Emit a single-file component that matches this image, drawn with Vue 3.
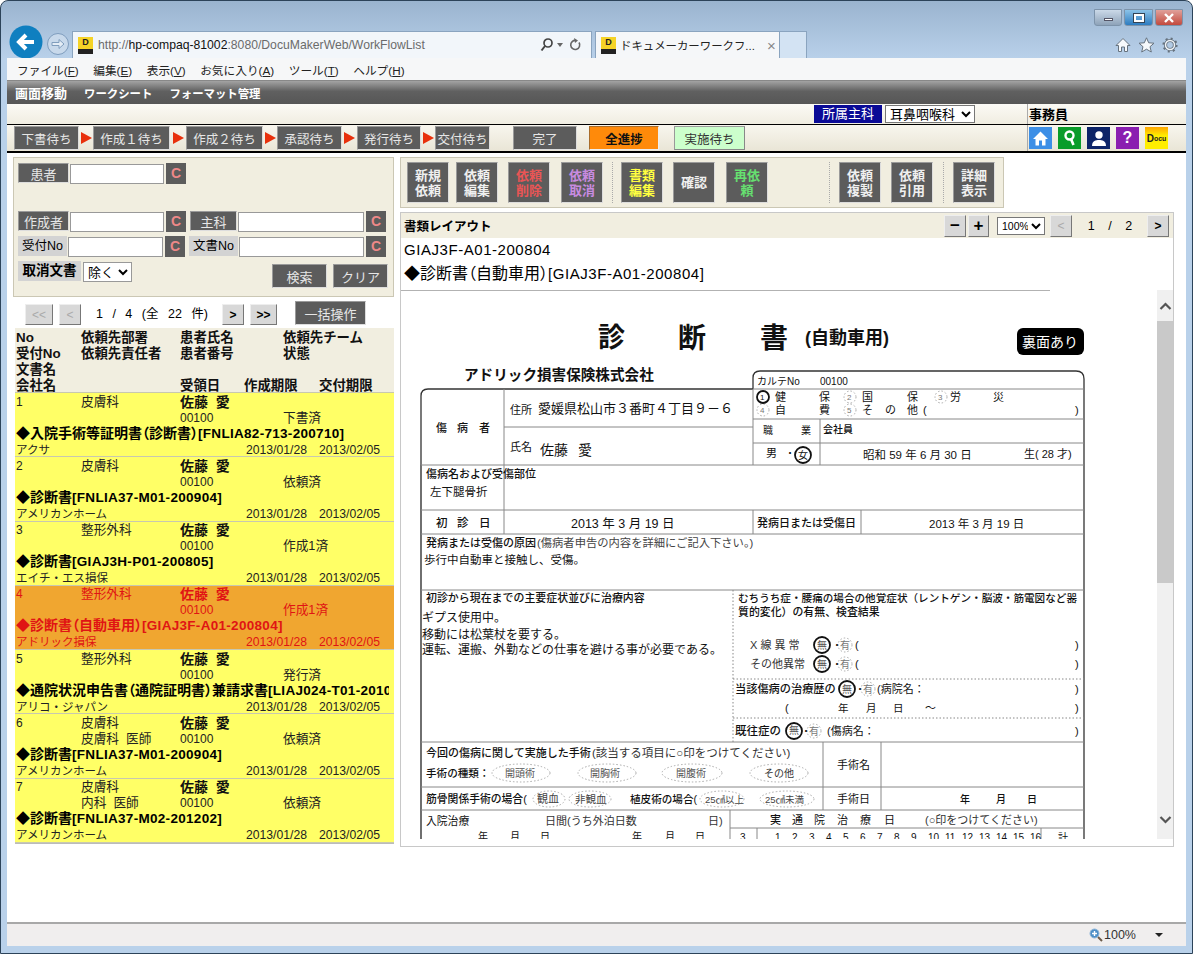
<template>
  <div class="win">
    <div class="caption">
      <div class="winbtns">
        <span class="wb wb-min"><i></i></span>
        <span class="wb wb-max"><i></i></span>
        <span class="wb wb-close">
          <svg width="12" height="10" viewBox="0 0 12 10"><path d="M2 1 L10 9 M10 1 L2 9" stroke="#fff" stroke-width="2.4" fill="none" /></svg>
        </span>
      </div>
    </div>
    <div class="navrow">
      <div class="back">
        <svg width="34" height="34" viewBox="0 0 34 34">
          <circle cx="17" cy="17" r="16.5" fill="#0f7fc0" />
          <path d="M25 17 H11 M17 10 L10 17 L17 24" stroke="#fff" stroke-width="4" fill="none" />
        </svg>
      </div>
      <div class="fwd">
        <svg width="22" height="22" viewBox="0 0 22 22">
          <circle cx="11" cy="11" r="10.5" fill="#c8d9eb" stroke="#7f9dbd" />
          <path d="M5 9.5 H12 V6.5 L17 11 L12 15.5 V12.5 H5 Z" fill="#e4edf6" stroke="#7f9dbd" stroke-width="1" />
        </svg>
      </div>
      <div class="addr">
        <span class="fav"><b>D</b></span>
        <span class="url">http://<em>hp-compaq-81002</em>:8080/DocuMakerWeb/WorkFlowList</span>
        <svg class="addr-ico" width="46" height="16" viewBox="0 0 46 16">
          <circle cx="8" cy="6" r="4" fill="none" stroke="#444" stroke-width="1.7" />
          <path d="M5 9 L1.5 13.5" stroke="#444" stroke-width="2" />
          <path d="M17 6 h6 l-3 4 z" fill="#666" />
          <path d="M36 3.5 a4.5 4.5 0 1 0 3 2" fill="none" stroke="#666" stroke-width="1.6" />
          <path d="M34 1 l4 2.5 l-3 2.5 z" fill="#666" />
        </svg>
      </div>
      <div class="tab">
        <span class="fav"><b>D</b></span>
        <span class="tab-t">ドキュメーカーワークフ...</span>
        <span class="tab-x">×</span>
      </div>
      <div class="newtab"></div>
      <div class="spacer"></div>
      <div class="tools">
        <svg width="16" height="16" viewBox="0 0 16 16"><path d="M8 1.5 L15 8.5 H12.5 V14.5 H9.5 V10 H6.5 V14.5 H3.5 V8.5 H1 Z" fill="#f6f9fc" stroke="#66727e" /></svg>
        <svg width="17" height="16" viewBox="0 0 17 16"><path d="M8.5 .8 L10.7 5.8 L16 6.2 L12 9.7 L13.3 15 L8.5 12.2 L3.7 15 L5 9.7 L1 6.2 L6.3 5.8 Z" fill="#f6f9fc" stroke="#66727e" /></svg>
        <svg width="16" height="16" viewBox="0 0 16 16"><circle cx="8" cy="8" r="4.5" fill="none" stroke="#66727e" stroke-width="3.2" /><circle cx="8" cy="8" r="6.4" fill="none" stroke="#66727e" stroke-width="2.4" stroke-dasharray="2 3" /><circle cx="8" cy="8" r="4.5" fill="none" stroke="#f0f4f8" stroke-width="1.5" /></svg>
      </div>
    </div>

    <div class="menubar">
      <span v-for="m in menus" :key="m.a">{{ m.t }}(<u>{{ m.a }}</u>)</span>
    </div>
    <div class="darkbar">
      <span class="db1">画面移動</span><span class="db2">ワークシート</span><span class="db2">フォーマット管理</span>
    </div>
    <div class="inforow">
      <span class="dept-label">所属主科</span>
      <select class="dept-sel"><option>耳鼻咽喉科</option></select>
      <span class="role">事務員</span>
    </div>
    <div class="stagerow">
      <template v-for="(s, i) in stages" :key="s.t">
        <span class="btn stage" :style="{ width: s.w + 'px' }">{{ s.t }}</span>
        <span v-if="i < stages.length - 1" class="arrow" :style="{ width: s.g + 'px' }"><i></i></span>
      </template>
      <span class="btn stage done">完了</span>
      <span class="btn stage all">全進捗</span>
      <span class="btn stage impl">実施待ち</span>
      <div class="appicons">
        <span class="appi" style="background:#3d8fe6">
          <svg width="17" height="17" viewBox="0 0 17 17"><path d="M8.5 1.5 L16 9 H13.5 V15.5 H10 V10.5 H7 V15.5 H3.5 V9 H1 Z" fill="#fff" /></svg>
        </span>
        <span class="appi" style="background:#0a9c2a">
          <svg width="17" height="19" viewBox="0 0 17 19"><circle cx="8.5" cy="6.5" r="4" fill="none" stroke="#fff" stroke-width="2.4" /><path d="M10 10 L12.5 16" stroke="#fff" stroke-width="2.6" /></svg>
        </span>
        <span class="appi" style="background:#0d2468">
          <svg width="18" height="19" viewBox="0 0 18 19"><circle cx="9" cy="6" r="3.7" fill="#fff" /><path d="M2 17 C2 11.5 6 11 9 11 C12 11 16 11.5 16 17 Z" fill="#fff" /></svg>
        </span>
        <span class="appi q" style="background:#8a1fb0">?</span>
        <span class="appi docu">D<small>ocu</small></span>
      </div>
    </div>

    <div class="main">
      <div class="left">
        <div class="filter">
          <div class="frow r1">
            <span class="btn lab">患者</span>
            <input class="inp w94" />
            <span class="cbtn">C</span>
          </div>
          <div class="frow r2">
            <span class="btn lab">作成者</span>
            <input class="inp w94" />
            <span class="cbtn">C</span>
            <span class="btn lab lab2">主科</span>
            <input class="inp w126" />
            <span class="cbtn">C</span>
          </div>
          <div class="frow r3">
            <span class="glab">受付No</span>
            <input class="inp w95" />
            <span class="cbtn">C</span>
            <span class="glab glab2">文書No</span>
            <input class="inp w125" />
            <span class="cbtn">C</span>
          </div>
          <div class="frow r4">
            <span class="glab cancel">取消文書</span>
            <select class="sel-jo"><option>除く</option></select>
            <div class="spacer"></div>
            <span class="btn act">検索</span>
            <span class="btn act">クリア</span>
          </div>
        </div>
        <div class="pager">
          <span class="pbtn off w28">&lt;&lt;</span>
          <span class="pbtn off w22">&lt;</span>
          <span class="ptext">1 / 4 (全 22 件)</span>
          <span class="pbtn w22">&gt;</span>
          <span class="pbtn w27">&gt;&gt;</span>
          <span class="btn bulk">一括操作</span>
        </div>
        <div class="list">
          <div class="lrow head">
            <span class="c1">No</span><span class="c2">依頼先部署</span><span class="c3">患者氏名</span><span class="c5">依頼先チーム</span>
            <span class="c1">受付No</span><span class="c2">依頼先責任者</span><span class="c3">患者番号</span><span class="c5">状態</span>
            <span class="full">文書名</span>
            <span class="c1">会社名</span><span class="c3">受領日</span><span class="c4">作成期限</span><span class="c6">交付期限</span>
          </div>
          <div v-for="r in rows" :key="r.no" class="lrow" :class="{ sel: r.sel }">
            <span class="c1">{{ r.no }}</span><span class="c2 dp">{{ r.dept }}</span><span class="c3 nm">佐藤&nbsp;&nbsp;愛</span>
            <span class="c2 dp">{{ r.sub }}</span><span class="c3">00100</span><span class="c5 dp">{{ r.st }}</span>
            <span class="full docn"><span class="dn">{{ r.name }}</span><span class="dc">{{ r.code }}</span></span>
            <span class="c1 co">{{ r.co }}</span><span class="c4 dt">2013/01/28</span><span class="c6 dt">2013/02/05</span>
          </div>
        </div>
      </div>

      <div class="right">
        <div class="toolbar">
          <template v-for="b in tools" :key="b.t">
            <span v-if="b.sep" class="tsep" :style="{ marginLeft: b.ml + 'px', marginRight: b.mr + 'px' }"></span>
            <span v-else class="btn tbtn" :style="{ color: b.c, marginRight: b.m + 'px' }">{{ b.t }}</span>
          </template>
        </div>
        <div class="docpanel">
          <div class="dochead">
            <span class="dh-t">書類レイアウト</span>
            <div class="spacer"></div>
            <span class="pbtn zm">−</span>
            <span class="pbtn zm">+</span>
            <select class="zoomsel"><option>100%</option></select>
            <span class="pbtn off w22">&lt;</span>
            <span class="dh-p">1 / 2</span>
            <span class="pbtn w22">&gt;</span>
          </div>
          <div class="docinfo">
            <div>GIAJ3F-A01-200804</div>
            <div><span class="din">◆診断書（自動車用）</span>[GIAJ3F-A01-200804]</div>
          </div>
          <div class="docview">
            <svg class="scan" width="756" height="549" viewBox="401 290 756 549">
              <line x1="401" y1="290" x2="1050" y2="290" stroke="#666" />
              <rect x="1017" y="328" width="67" height="27" rx="6" fill="#000" />
              <path d="M421 465 V396 Q421 389 428 389 H753" fill="none" stroke="#333" stroke-width="1.3" />
              <path d="M753 389 V378 Q753 371 760 371 H1076 Q1084 371 1084 379 V839" fill="none" stroke="#333" stroke-width="1.3" />
              <line x1="421" y1="465" x2="421" y2="839" stroke="#222" stroke-width="1.3" />
              <line v-for="(l, i) in lines" :key="'l' + i" :x1="l[0]" :y1="l[1]" :x2="l[2]" :y2="l[3]" stroke="#888" :stroke-dasharray="l[4] ? '1.5 2' : null" />
              <ellipse v-for="(o, i) in ovals" :key="'o' + i" :cx="o[0]" :cy="o[1]" :rx="o[2]" :ry="o[3]" fill="none" stroke="#aaa" stroke-dasharray="1.5 2" />
              <circle v-for="(c, i) in rings" :key="'c' + i" :cx="c[0]" :cy="c[1]" :r="c[2]" fill="none" stroke="#111" stroke-width="1.8" />
              <text v-for="(t, i) in texts" :key="'t' + i" :x="t[0]" :y="t[1]" :font-size="t[3]" :font-weight="t[4] ? (t[3] >= 14 ? 700 : 500) : 400" :fill="t[5] || '#111'" dominant-baseline="central">{{ t[2] }}</text>
            </svg>
            <div class="scroll">
              <svg class="sarrow" width="15" height="9" viewBox="0 0 15 9"><path d="M2.5 7 L7.5 2 L12.5 7" fill="none" stroke="#555" stroke-width="2.2" /></svg>
              <div class="thumb"></div>
              <div class="spacer"></div>
              <svg class="sarrow down" width="15" height="9" viewBox="0 0 15 9"><path d="M2.5 2 L7.5 7 L12.5 2" fill="none" stroke="#555" stroke-width="2.2" /></svg>
            </div>
          </div>
        </div>
      </div>
    </div>

    <div class="status">
      <svg width="14" height="14" viewBox="0 0 14 14"><circle cx="5.5" cy="5.5" r="4.5" fill="#4d8fc7" stroke="#8db5d8" /><path d="M3 5.5 H8 M5.5 3 V8" stroke="#fff" stroke-width="1.4" /><path d="M9 9 L13 13" stroke="#6b5a48" stroke-width="2" /></svg>
      <span class="st-zoom">100%</span>
      <i class="st-caret"></i>
    </div>
  </div>
</template>

<script setup>
const menus = [
  { t: 'ファイル', a: 'F' },
  { t: '編集', a: 'E' },
  { t: '表示', a: 'V' },
  { t: 'お気に入り', a: 'A' },
  { t: 'ツール', a: 'T' },
  { t: 'ヘルプ', a: 'H' },
]

const stages = [
  { t: '下書待ち', w: 65, g: 14 },
  { t: '作成１待ち', w: 77, g: 16 },
  { t: '作成２待ち', w: 77, g: 14 },
  { t: '承認待ち', w: 65, g: 15 },
  { t: '発行待ち', w: 64, g: 14 },
  { t: '交付待ち', w: 55, g: 0 },
]

const rows = [
  { no: 1, dept: '皮膚科', sub: '', st: '下書済', name: '◆入院手術等証明書（診断書）', code: '[FNLIA82-713-200710]', co: 'アクサ' },
  { no: 2, dept: '皮膚科', sub: '', st: '依頼済', name: '◆診断書', code: '[FNLIA37-M01-200904]', co: 'アメリカンホーム' },
  { no: 3, dept: '整形外科', sub: '', st: '作成1済', name: '◆診断書', code: '[GIAJ3H-P01-200805]', co: 'エイチ・エス損保' },
  { no: 4, dept: '整形外科', sub: '', st: '作成1済', name: '◆診断書（自動車用）', code: '[GIAJ3F-A01-200804]', co: 'アドリック損保', sel: true },
  { no: 5, dept: '整形外科', sub: '', st: '発行済', name: '◆通院状況申告書（通院証明書）兼請求書', code: '[LIAJ024-T01-201006]', co: 'アリコ・ジャパン' },
  { no: 6, dept: '皮膚科', sub: '皮膚科  医師', st: '依頼済', name: '◆診断書', code: '[FNLIA37-M01-200904]', co: 'アメリカンホーム' },
  { no: 7, dept: '皮膚科', sub: '内科  医師', st: '依頼済', name: '◆診断書', code: '[FNLIA37-M02-201202]', co: 'アメリカンホーム' },
]

const tools = [
  { t: '新規依頼', c: '#f0f0f0', m: 7 },
  { t: '依頼編集', c: '#f0f0f0', m: 10 },
  { t: '依頼削除', c: '#ea5555', m: 11 },
  { t: '依頼取消', c: '#c88be0', m: 0 },
  { sep: true, ml: 9, mr: 8 },
  { t: '書類編集', c: '#ffff40', m: 10 },
  { t: '確認', c: '#f0f0f0', m: 11 },
  { t: '再依頼', c: '#66e070', m: 0 },
  { sep: true, ml: 61, mr: 9 },
  { t: '依頼複製', c: '#f0f0f0', m: 10 },
  { t: '依頼引用', c: '#f0f0f0', m: 0 },
  { sep: true, ml: 10, mr: 9 },
  { t: '詳細表示', c: '#f0f0f0', m: 0 },
]

// scan of the paper form, in page coordinates
const lines = [
  [504, 389, 504, 534],
  [504, 427, 753, 427],
  [753, 389, 753, 465],
  [753, 389, 1084, 389],
  [753, 419, 1084, 419],
  [753, 443, 1084, 443],
  [820, 419, 820, 465],
  [421, 465, 1084, 465],
  [421, 510, 1084, 510],
  [421, 534, 1084, 534],
  [753, 510, 753, 534],
  [861, 510, 861, 534],
  [421, 590, 1084, 590],
  [733, 590, 733, 742, true],
  [733, 679, 1084, 679, true],
  [733, 718, 1084, 718, true],
  [421, 742, 1084, 742],
  [421, 787, 1084, 787],
  [421, 810, 1084, 810],
  [823, 742, 823, 810],
  [881, 742, 881, 810],
  [730, 810, 730, 839],
  [730, 828, 1084, 828],
  [757, 828, 757, 839],
  [1041, 828, 1041, 839],
]

const ovals = [
  [521, 773, 29, 9], [607, 773, 29, 9], [692, 773, 30, 9], [779, 773, 29, 9],
  [549, 799, 16, 8], [590, 799, 21, 8], [722, 799, 22, 8], [787, 799, 27, 8],
  [850, 397, 6, 6], [941, 397, 6, 6], [763, 410, 6, 6], [850, 410, 6, 6],
  [845, 645, 7, 7], [845, 664, 7, 7], [868, 689, 7, 7], [814, 731, 7, 7],
]

const rings = [
  [763, 397, 6], [803, 455, 8], [822, 645, 8], [822, 664, 8], [847, 689, 8], [794, 731, 8],
]

const nums = ['1', '2', '3', '4', '5', '6', '7', '8', '9', '10', '11', '12', '13', '14', '15', '16']

const texts = [
  [598, 338, '診', 27, true], [678, 338, '断', 28, true], [760, 338, '書', 28, true],
  [805, 338, '(自動車用)', 18, true],
  [1022, 342, '裏面あり', 14, false, '#fff'],
  [464, 375, 'アドリック損害保険株式会社', 14.6, true],
  [436, 428, '傷', 11, true], [457, 428, '病', 11, true], [479, 428, '者', 11, true],
  [510, 410, '住所', 11], [538, 408, '愛媛県松山市３番町４丁目９－６', 13],
  [510, 447, '氏名', 11], [540, 450, '佐藤', 14], [578, 450, '愛', 14],
  [757, 381, 'カルテNo', 10], [820, 381, '00100', 10],
  [760, 397, '1', 8], [775, 397, '健', 11], [819, 397, '保', 11], [847, 397, '2', 8, false, '#777'], [862, 397, '国', 11], [907, 397, '保', 11], [938, 397, '3', 8, false, '#777'], [950, 397, '労', 11], [993, 397, '災', 11],
  [760, 410, '4', 8, false, '#777'], [775, 410, '自', 11], [819, 410, '費', 11], [847, 410, '5', 8, false, '#777'], [862, 410, 'そ', 11], [885, 410, 'の', 11], [907, 410, '他', 11], [923, 410, '(', 11], [1075, 410, ')', 11],
  [763, 430, '職', 10], [801, 430, '業', 10], [823, 429, '会社員', 10, true],
  [766, 453, '男', 11], [785, 453, '・', 10], [798, 455, '女', 10],
  [863, 455, '昭和 59 年 6 月 30 日', 11.5], [1024, 454, '生( 28 才)', 11],
  [426, 474, '傷病名および受傷部位', 11, true], [430, 492, '左下腿骨折', 11.5],
  [436, 523, '初', 11.5, true], [457, 523, '診', 11.5, true], [479, 523, '日', 11.5, true],
  [571, 524, '2013 年 3 月 19 日', 12.5],
  [757, 523, '発病日または受傷日', 11, true], [929, 524, '2013 年 3 月 19 日', 11.5],
  [426, 543, '発病または受傷の原因', 11, true], [537, 543, '(傷病者申告の内容を詳細にご記入下さい。)', 11.3, false, '#444'],
  [424, 560, '歩行中自動車と接触し、受傷。', 11.5],
  [426, 598, '初診から現在までの主要症状並びに治療内容', 10.95, true],
  [422, 618, 'ギプス使用中。', 12], [422, 635, '移動には松葉杖を要する。', 12], [422, 650, '運転、運搬、外勤などの仕事を避ける事が必要である。', 12],
  [738, 598, 'むちうち症・腰痛の場合の他覚症状（レントゲン・脳波・筋電図など器', 10.6, true],
  [738, 612, '質的変化）の有無、検査結果', 10.9, true],
  [750, 645, 'X 線 異 常', 11, false, '#333'], [750, 664, 'その他異常', 11, false, '#333'],
  [817, 645, '無', 10, false, '#555'], [817, 664, '無', 10, false, '#555'], [832, 645, '・', 10], [832, 664, '・', 10],
  [840, 645, '有', 10, false, '#777'], [840, 664, '有', 10, false, '#777'], [855, 645, '(', 11], [855, 664, '(', 11], [1075, 645, ')', 11], [1075, 664, ')', 11],
  [735, 689, '当該傷病の治療歴の', 11.2, true], [842, 689, '無', 10, false, '#555'], [855, 689, '・', 10], [863, 689, '有', 10, false, '#777'], [877, 689, '(病院名：', 11], [1075, 689, ')', 11],
  [785, 708, '(', 11], [838, 708, '年', 10.5], [866, 708, '月', 10.5], [893, 708, '日', 10.5], [925, 708, '～', 11], [1075, 708, ')', 11],
  [735, 731, '既往症の', 11.5, true], [789, 730, '無', 10, false, '#555'], [801, 731, '・', 10], [809, 731, '有', 10, false, '#777'], [827, 731, '(傷病名：', 11], [1075, 731, ')', 11],
  [426, 753, '今回の傷病に関して実施した手術', 11, true], [592, 753, '(該当する項目に○印をつけてください)', 11.5, false, '#333'],
  [426, 773, '手術の種類：', 10.6, true],
  [505, 773, '開頭術', 10, false, '#555'], [590, 773, '開胸術', 10, false, '#555'], [676, 773, '開腹術', 10, false, '#555'], [764, 773, 'その他', 10, false, '#333'],
  [837, 765, '手術名', 11], [837, 799, '手術日', 11],
  [960, 799, '年', 10, true], [996, 799, '月', 10, true], [1027, 799, '日', 10, true],
  [426, 799, '筋骨関係手術の場合(', 10.8, true],
  [537, 799, '観血', 11, false, '#444'], [575, 799, '非観血', 10.5, false, '#444'],
  [630, 799, '植皮術の場合(', 10.6, true], [705, 799, '25㎠以上', 9.5, false, '#444'], [765, 799, '25㎠未満', 9.5, false, '#444'],
  [426, 821, '入院治療', 10.8], [545, 821, '日間(うち外泊日数', 11, false, '#333'], [708, 821, '日)', 11, false, '#333'],
  [770, 820, '実', 11, true], [792, 820, '通', 11], [814, 820, '院', 11], [837, 820, '治', 11], [860, 820, '療', 11], [884, 820, '日', 11],
  [925, 820, '(○印をつけてください)', 11, false, '#333'],
  [478, 836, '年', 10], [510, 836, '月', 10], [540, 836, '日', 10], [632, 836, '年', 10], [665, 836, '月', 10], [695, 836, '日', 10],
  [740, 837, '3', 10],
  ...nums.map((n, i) => [775 + i * 17, 837, n, 10]),
  [1058, 837, '計', 10],
]
</script>

<style>
html, body { margin: 0; background: #fff; }
</style>

<style scoped>
.win {
  width: 1193px;
  height: 954px;
  box-sizing: border-box;
  border: 1px solid #2c4359;
  border-radius: 8px 8px 0 0;
  background: linear-gradient(#9ab4cf 0, #b9d1ea 58px);
  padding: 0 6px 7px;
  display: flex;
  flex-direction: column;
  font-family: "Liberation Sans", "Noto Sans CJK JP", sans-serif;
  font-size: 12px;
  color: #000;
  overflow: hidden;
}
.spacer { flex: 1; }
.caption { height: 30px; display: flex; justify-content: flex-end; align-items: flex-start; flex: none; }
.winbtns { display: flex; gap: 2px; margin: 8px 3px 0 0; }
.wb { height: 17px; display: flex; align-items: center; justify-content: center; border: 1px solid #7d93aa; border-radius: 0 0 3px 3px; box-sizing: border-box; }
.wb-min { width: 28px; background: linear-gradient(#cbd9e8, #8ea3b9); }
.wb-min i { width: 9px; height: 3px; background: #fff; border: 1px solid #556; margin-top: 4px; box-sizing: border-box; }
.wb-max { width: 29px; background: linear-gradient(#8cc3e8, #2d7cc0); }
.wb-max i { width: 10px; height: 8px; border: 2px solid #fff; outline: 1px solid #345; box-sizing: border-box; }
.wb-close { width: 28px; background: linear-gradient(#e0a09a, #c34a3e); }
.navrow { height: 27px; display: flex; flex: none; align-items: stretch; }
.back { width: 34px; height: 34px; margin: -6px 0 0 2px; flex: none; }
.fwd { width: 22px; height: 22px; margin: 2px 0 0 4px; flex: none; }
.addr {
  width: 520px;
  margin-left: 3px;
  box-sizing: border-box;
  border: 1px solid #8aa4bf;
  border-bottom: none;
  background: #f2f6fa;
  display: flex;
  align-items: center;
  padding: 0 5px;
  flex: none;
}
.fav {
  width: 15px;
  height: 17px;
  flex: none;
  background: linear-gradient(#f5d327 0 70%, #222 70%);
  display: flex;
  justify-content: center;
  align-items: flex-start;
  font: 700 9px/11px "Liberation Sans", sans-serif;
  color: #222;
}
.url { margin-left: 5px; font-size: 12.2px; color: #6b6b6b; white-space: nowrap; flex: 1; }
.url em { font-style: normal; color: #111; }
.addr-ico { flex: none; }
.tab {
  width: 185px;
  margin-left: 3px;
  box-sizing: border-box;
  border: 1px solid #8aa4bf;
  border-bottom: none;
  background: #f5f7f9;
  display: flex;
  align-items: center;
  padding-left: 5px;
  flex: none;
}
.tab-t { margin-left: 4px; font-size: 11.4px; white-space: nowrap; color: #222; width: 142px; }
.tab-x { margin-left: 5px; color: #888; font-size: 15px; }
.newtab { width: 27px; flex: none; border: 1px solid #8aa4bf; border-left: none; border-bottom: none; background: #d3e3f3; box-sizing: border-box; }
.tools { display: flex; gap: 7px; align-items: center; margin-right: 8px; }
.menubar {
  height: 22px;
  flex: none;
  background: #f6f7f8;
  display: flex;
  align-items: center;
  padding-left: 10px;
  gap: 14.5px;
  font-size: 11.7px;
  color: #222;
}
.darkbar {
  height: 24px;
  flex: none;
  background: linear-gradient(#a3a3a3 0, #606060 45%, #565656 100%);
  display: flex;
  align-items: center;
  padding-left: 8px;
  gap: 17px;
  color: #fff;
  font-weight: 700;
  border-top: 1px solid #888;
  box-sizing: border-box;
}
.db1 { font-size: 13px; }
.db2 { font-size: 11.4px; }
.inforow {
  height: 21px;
  flex: none;
  display: flex;
  align-items: center;
  background: linear-gradient(#fbfaf5, #f0ede1);
  box-sizing: border-box;
  border-bottom: 1px solid #000;
  padding-left: 807px;
}
.dept-label {
  width: 68px;
  height: 18px;
  background: #0a0a96;
  color: #fff;
  font-size: 13px;
  line-height: 18px;
  text-align: center;
}
.dept-sel {
  width: 90px;
  height: 18px;
  margin-left: 3px;
  font: 13px "Liberation Sans", "Noto Sans CJK JP", sans-serif;
  padding: 0;
  border: 1px solid #777;
  background: #fff;
}
.role { margin-left: 52px; padding-left: 1px; font-weight: 700; font-size: 13px; border-left: 1px solid #aaa; height: 20px; line-height: 22px; }
.stagerow {
  height: 28px;
  flex: none;
  display: flex;
  align-items: center;
  background: linear-gradient(#f8f6ee, #e9e5d6);
  box-sizing: border-box;
  border-bottom: 2px solid #000;
  padding-left: 7px;
}
.btn {
  display: flex;
  align-items: center;
  justify-content: center;
  box-sizing: border-box;
  background: #5c5c5c;
  color: #e6e6e6;
  border-top: 1px solid #9a9a9a;
  border-left: 1px solid #9a9a9a;
  border-right: 1px solid #ddd;
  border-bottom: 1px solid #ddd;
  white-space: nowrap;
}
.stage { height: 24px; font-size: 12.5px; }
.arrow { height: 24px; display: flex; align-items: center; justify-content: center; flex: none; }
.arrow i { border-left: 11px solid #e8300c; border-top: 6px solid transparent; border-bottom: 6px solid transparent; }
.done { width: 64px; margin-left: 23px; }
.all { width: 70px; margin-left: 12px; background: #ff8a0a; color: #111; font-weight: 700; border-color: #a86c2a #eee #eee #a86c2a; }
.impl { width: 71px; margin-left: 15px; background: #ccffcc; color: #333; border-color: #999 #888 #888 #999; }
.appicons { margin-left: 282px; padding-left: 1px; border-left: 1px solid #aaa; display: flex; height: 26px; align-items: center; }
.appi {
  width: 23px;
  height: 22px;
  margin-right: 6px;
  display: flex;
  align-items: center;
  justify-content: center;
  color: #fff;
  font-weight: 700;
  font-size: 16px;
  flex: none;
}
.docu { background: linear-gradient(#ffa500, #ffee00 40%, #ffee00); color: #222; font-size: 10px; }
.docu small { font-size: 7px; }
.main {
  flex: 1;
  min-height: 0;
  background: #fff;
  display: flex;
  align-items: flex-start;
  padding: 4px 0 0 6px;
  border-bottom: 2px solid #a8a8a8;
  overflow: hidden;
}
.left { width: 381px; flex: none; }
.filter {
  height: 140px;
  box-sizing: border-box;
  background: #f1eee0;
  border: 1px solid #cbc7b4;
  padding: 5px 5px 0 4px;
}
.frow { display: flex; align-items: flex-start; }
.r1 { height: 21px; }
.r2 { height: 21px; margin-top: 27px; }
.r3 { height: 21px; margin-top: 4px; }
.r4 { height: 27px; margin-top: 4px; }
.lab { width: 51px; height: 20px; font-size: 13px; }
.lab2 { width: 47px; margin-left: 4px; }
.inp {
  height: 20px;
  box-sizing: border-box;
  border: 1px solid #999;
  background: #fff;
  margin: 1px 1px 0;
  padding: 0;
}
.w94 { width: 94px; }
.w95 { width: 95px; }
.w125 { width: 125px; }
.w126 { width: 126px; }
.cbtn {
  width: 20px;
  height: 21px;
  margin-left: 1px;
  background: #5c5c5c;
  color: #e88;
  font: 700 14px/21px "Liberation Sans", sans-serif;
  text-align: center;
  flex: none;
}
.glab { width: 49px; height: 20px; background: #d3d3d3; color: #000; font-size: 12.5px; line-height: 20px; text-align: center; flex: none; white-space: nowrap; }
.glab2 { margin-left: 4px; }
.cancel { width: 63px; line-height: 20px; font-size: 13.5px; font-weight: 700; }
.sel-jo { width: 49px; height: 20px; margin: 1px 0 0 2px; font: 13px "Liberation Sans", "Noto Sans CJK JP", sans-serif; padding: 0; border: 1px solid #999; background: #fff; }
.act { width: 55px; height: 24px; margin: 3px 0 0 6px; font-size: 13px; }
.pager { height: 31px; display: flex; align-items: flex-end; padding: 0 0 3px 12px; box-sizing: border-box; }
.pbtn {
  height: 21px;
  box-sizing: border-box;
  display: flex;
  align-items: center;
  justify-content: center;
  background: #d8d8d8;
  color: #000;
  font-weight: 700;
  font-size: 12px;
  border-top: 1px solid #eee;
  border-left: 1px solid #eee;
  border-right: 1px solid #777;
  border-bottom: 1px solid #777;
  flex: none;
}
.off { color: #aaa; font-weight: 400; }
.w28 { width: 28px; margin-right: 6px; }
.w27 { width: 27px; margin-right: 6px; }
.w22 { width: 22px; margin-right: 6px; }
.ptext { width: 130px; height: 21px; line-height: 20px; flex: none; text-align: center; font-size: 12.5px; word-spacing: 6px; white-space: nowrap; margin-right: 5px; }
.bulk { width: 71px; height: 24px; margin-left: 12px; font-size: 13px; }
.list { margin-left: 2px; width: 379px; border-bottom: 1px solid #bbb; }
.lrow {
  display: grid;
  grid-template-columns: 65px 99px 66px 37px 36px 1fr;
  grid-auto-rows: 16px;
  box-sizing: border-box;
  height: 64.3px;
  padding: .5px 0 0 1px;
  background: #ffff66;
  border-bottom: 1px solid #c8c8b0;
  line-height: 16px;
  font-size: 12px;
  color: #222;
  white-space: pre;
}
.head { background: #f1eee0; font-weight: 700; font-size: 13.4px; color: #111; height: 65px; padding-top: 2px; }
.sel { background: #f0a630; color: #e01414; }
.c1 { grid-column: 1; }
.c2 { grid-column: 2; }
.c3 { grid-column: 3; }
.c4 { grid-column: 4; }
.c5 { grid-column: 5; }
.c6 { grid-column: 6; }
.full { grid-column: 1 / -1; }
.lrow .co { grid-column: 1 / 4; font-size: 11.5px; }
.dp { font-size: 12.7px; }
.nm { font-weight: 700; font-size: 14px; color: #111; }
.sel .nm, .sel .docn { color: #e01414; }
.docn { font-weight: 700; color: #000; width: 373px; overflow-x: clip; margin-top: -2px; }
.dn { font-size: 14px; font-family: "Noto Sans CJK JP", sans-serif; font-feature-settings: "palt"; }
.dc { font-size: 13.5px; letter-spacing: .3px; }
.dt { font-size: 12.2px; }
.head .c4 { margin-left: -2px; }
.right { width: 775px; margin-left: 6px; flex: none; }
.toolbar {
  width: 604px;
  height: 51px;
  box-sizing: border-box;
  background: #f1eee0;
  border: 1px solid #cbc7b4;
  padding: 4px 0 0 6px;
  display: flex;
  align-items: flex-start;
}
.tbtn {
  width: 42px;
  height: 41px;
  font-weight: 700;
  font-size: 13px;
  line-height: 15px;
  white-space: normal;
  text-align: center;
  padding: 0 6px;
  flex: none;
}
.tsep { width: 0; height: 41px; border-left: 1px dotted #aaa; flex: none; }
.docpanel { margin-top: 4px; width: 774px; height: 635px; box-sizing: border-box; border: 1px solid #c8c8c8; }
.dochead { height: 25px; background: #f1eee0; display: flex; align-items: center; padding-right: 4px; }
.dh-t { margin-left: 3px; font-weight: 700; font-size: 12.5px; }
.dochead .pbtn { height: 22px; }
.zm { width: 22px; font-size: 17px; margin-right: 2px; }
.zm + .zm { width: 21px; margin-right: 0; }
.zoomsel { width: 48px; height: 18px; margin: 0 5px 0 8px; padding: 0; font: 10.5px "Liberation Sans", sans-serif; border: 1px solid #777; background: #fff; }
.dh-p { width: 64px; text-align: center; font-size: 12.5px; word-spacing: 10px; margin-right: 5px; }
.dochead .pbtn:last-child { margin-right: 0; }
.docinfo { height: 52px; padding: 0 0 0 3px; font-size: 15px; letter-spacing: .55px; line-height: 23px; box-sizing: border-box; white-space: nowrap; }
.din { font-size: 16px; letter-spacing: 0; font-family: "Noto Sans CJK JP", sans-serif; font-feature-settings: "palt"; }
.docview { display: flex; align-items: flex-start; }
.scan { display: block; flex: none; font-family: "Liberation Sans", "Noto Sans CJK JP", sans-serif; }
.scroll { width: 16px; height: 549px; background: #f0f0f0; display: flex; flex-direction: column; align-items: center; flex: none; }
.sarrow { flex: none; margin: 12px 0; }
.sarrow.down { margin-bottom: 15px; }
.thumb { width: 16px; height: 262px; margin-top: -2px; background: #c9c9c9; flex: none; }
.status {
  height: 22px;
  flex: none;
  background: #f0eeee;
  display: flex;
  align-items: center;
  justify-content: flex-end;
  padding-right: 23px;
  color: #333;
  font-size: 12.5px;
}
.st-zoom { margin-left: 1px; }
.st-caret { margin-left: 19px; border-top: 4px solid #222; border-left: 4px solid transparent; border-right: 4px solid transparent; }
</style>
